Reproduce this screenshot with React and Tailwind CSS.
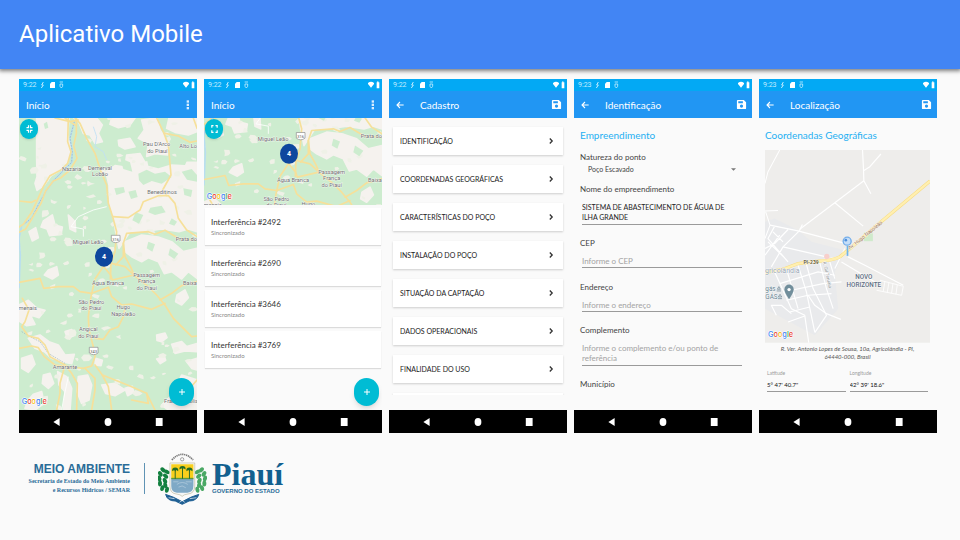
import React from "react";

const FONT = "font-[Lato,'Open_Sans',sans-serif]";

/* ---------- phone chrome ---------- */

function StatusBar({ time }) {
  return (
    <div className="flex h-3 items-center bg-[#03a9f4] pr-0.5 pl-1 font-[Roboto,sans-serif] text-[7px] leading-3 text-[#c4ecff]">
      <span>{time}</span>
      <svg viewBox="0 0 72 24" className="ml-1 h-2 w-6" fill="none" stroke="#c4ecff" strokeWidth="3" aria-hidden="true">
        <path d="M7 3 L2 12 H7 L1 21" />
        <path d="M27 8 L32 3 H42 V21 H27 Z" fill="#ffffff" stroke="none" />
        <path d="M56 3 H66 M57 9 H65 V16 L61 21 L57 16 Z" strokeWidth="2.5" />
      </svg>
      <svg viewBox="0 0 36 24" className="ml-auto h-2 w-3" fill="#ffffff" aria-hidden="true">
        <path d="M0 6 Q9 -1 18 6 V9 L9 20 L0 9 Z" />
        <path d="M26 4 H28 V1 H31 V4 H34 V22 H26 Z" />
      </svg>
    </div>
  );
}

function BackIcon() {
  return (
    <svg viewBox="0 0 24 24" className="h-2 w-2" fill="none" stroke="currentColor" strokeWidth="3.2" aria-hidden="true">
      <path d="M23 12 H4 M12 3 L3 12 L12 21" />
    </svg>
  );
}

function SaveIcon() {
  return (
    <svg viewBox="0 0 24 24" className="h-[11px] w-[11px]" fill="currentColor" aria-hidden="true">
      <path fillRule="evenodd" d="M4 2 H17 L22 7 V20 Q22 22 20 22 H4 Q2 22 2 20 V4 Q2 2 4 2 Z M5 5 V9 H15 V5 Z M12 12 A3.4 3.4 0 1 0 12 19 A3.4 3.4 0 1 0 12 12 Z" />
    </svg>
  );
}

function Toolbar({ title, back }) {
  return (
    <div className="flex h-[27px] items-center bg-[#2196f3] px-[7px] text-white">
      {back && (
        <button type="button" aria-label="Voltar" className="mr-4">
          <BackIcon />
        </button>
      )}
      <h2 className="text-[10px] leading-4">{title}</h2>
      <button type="button" aria-label={back ? "Salvar" : "Mais opções"} className="-mr-0.5 ml-auto">
        {back ? (
          <SaveIcon />
        ) : (
          <svg viewBox="0 0 12 30" className="mr-0.5 h-2.5 w-1" fill="#d9edff" aria-hidden="true">
            <rect x="2" y="1" width="7" height="7" />
            <rect x="2" y="11" width="7" height="7" />
            <rect x="2" y="21" width="7" height="7" />
          </svg>
        )}
      </button>
    </div>
  );
}

function NavBar() {
  return (
    <div className="grid h-[23px] grid-cols-3 place-items-center bg-black px-3 text-white">
      <button type="button" aria-label="Voltar">
        <svg viewBox="0 0 8 8" className="h-2 w-2" fill="currentColor"><path d="M0.4 4 L6.6 0 V8 Z" /></svg>
      </button>
      <button type="button" aria-label="Tela inicial">
        <svg viewBox="0 0 8 8" className="h-2 w-2" fill="currentColor"><ellipse cx="4" cy="4" rx="3.4" ry="4" /></svg>
      </button>
      <button type="button" aria-label="Recentes">
        <svg viewBox="0 0 8 8" className="h-2 w-2" fill="currentColor"><rect x="0.8" width="6.8" height="8" /></svg>
      </button>
    </div>
  );
}

function Phone({ time, title, back, children }) {
  return (
    <section className="min-w-0 bg-[#fafafa]">
      <StatusBar time={time} />
      <Toolbar title={title} back={back} />
      <div className="relative h-73 overflow-hidden">{children}</div>
      <NavBar />
    </section>
  );
}

/* ---------- maps ---------- */

function GoogleMark({ x, y }) {
  return (
    <text x={x} y={y} fontFamily="Inter, Roboto, sans-serif" fontSize="22" fontWeight="500" stroke="#ffffff" strokeWidth="3" paintOrder="stroke">
      <tspan fill="#4285f4">G</tspan>
      <tspan fill="#ea4335">o</tspan>
      <tspan fill="#fbbc05">o</tspan>
      <tspan fill="#4285f4">g</tspan>
      <tspan fill="#34a853">l</tspan>
      <tspan fill="#ea4335">e</tspan>
    </text>
  );
}

const CLEARINGS = [
  "65,129 162,129 158,180 167,215 158,262 138,284 108,302 88,330 66,346 60,325 66,306 65,250",
  "185,129 245,129 262,150 250,175 262,200 240,205 225,180 205,175 195,150",
  "290,129 360,129 345,150 310,158 285,148",
  "380,135 425,129 435,165 462,205 458,240 420,236 395,244 400,205 370,190 388,165",
  "462,129 546,129 546,170 520,180 480,172 455,160",
  "310,196 345,190 360,215 330,222 312,212",
  "335,240 375,236 390,262 430,255 470,270 500,262 546,262 546,470 520,462 492,470 440,462 400,468 345,470 325,500 312,520 302,470 296,430 284,390 282,330 272,290 300,272 330,276",
  "330,500 380,480 430,486 470,500 505,530 546,520 546,610 520,590 500,612 470,590 448,596 430,560 400,548 380,560 350,545 330,530",
  "85,438 112,420 120,450 142,456 138,478 104,482 96,462 78,456",
  "100,585 125,575 130,600 112,612 88,600",
  "160,420 180,440 182,470 165,462",
  "42,470 62,458 70,488 52,498",
  "12,690 40,676 66,700 90,706 72,728 46,720 60,748 35,752 12,738",
  "40,790 75,780 102,800 130,810 150,840 178,838 170,866 140,860 110,850 88,830 60,820",
  "20,850 50,840 60,868 40,892 20,880",
  "128,890 155,905 170,940 165,1005 145,1005 150,950 132,930",
  "190,905 218,900 230,930 222,975 200,985 186,950",
  "85,900 105,895 116,925 100,940 82,925",
  "55,958 80,950 88,985 60,1005 30,1000 40,975",
  "260,930 300,925 330,945 300,962 272,955",
  "242,850 262,856 258,872 240,870",
  "486,660 510,645 520,668 500,690 482,680",
  "425,780 450,774 456,788 440,800 426,796",
  "470,808 500,800 515,815 546,806 546,830 510,828 480,835",
  "425,852 448,844 452,856 436,866",
  "515,860 546,850 546,885 530,880",
  "330,940 352,934 356,952 338,962",
  "150,770 170,764 176,782 158,790",
  "500,900 546,915 546,1005 460,1005 440,990 470,960",
];

const WOODS = [
  "395,250 440,244 500,254 520,246 510,270 470,268 430,280 400,272",
  "370,296 395,284 420,296 450,290 470,306 440,326 410,318 385,330 372,316",
  "298,340 326,336 330,352 304,360",
  "316,250 345,262 352,290 325,282",
  "490,190 520,206 546,204 546,252 520,244 500,228",
  "406,398 440,392 452,412 420,420 400,412",
  "340,350 362,345 368,366 348,372",
  "500,290 530,282 546,300 546,320 516,314",
  "362,412 385,420 372,446 352,436",
  "470,430 486,440 478,452 462,446",
  "505,340 532,345 528,366 508,360",
  "86,146 96,140 100,158 90,162",
  "400,500 420,508 412,530 395,520",
  "465,520 490,536 478,552 460,540",
];

/* small scattered clearings, same layout on every render */
const SPECKS = (() => {
  let seed = 11;
  const rnd = () => {
    seed = (seed * 16807) % 2147483647;
    return seed / 2147483647;
  };
  return Array.from({ length: 190 }, () => {
    const x = 12 + rnd() * 534;
    const y = 129 + rnd() * 876;
    const r = 4 + rnd() * 6;
    return Array.from({ length: 6 }, (_, k) => {
      const a = (k / 6) * Math.PI * 2;
      const q = r * (0.4 + rnd());
      return `${(x + Math.cos(a) * q * 1.4).toFixed(1)},${(y + Math.sin(a) * q).toFixed(1)}`;
    }).join(" ");
  }).filter((_, k) => k % 3 !== 2);
})();

const ROADS = [
  "M180 129 L195 145 L215 190 L240 235 L258 290 L275 330 L280 385 L293 425 L305 470 L300 530 L288 565 L286 612",
  "M160 129 L158 200 L168 230 L158 265 L138 285 L105 302 L85 335 L65 380 L50 412 L25 448 L12 456",
  "M184 129 L184 175 L176 212 L186 250 L165 285 L138 308 L115 318 L92 348 L78 385 L50 432 L32 462 L12 472",
  "M120 129 L165 140 L190 135 M150 129 L180 150",
  "M425 129 L445 170 L460 210 L468 300 L443 345 L456 362",
  "M450 175 L490 183 L525 202 L546 198 M535 129 L546 160",
  "M293 425 L340 428 L375 405 L385 380 L430 362 L460 362 L480 385 L490 430 L515 465 L546 485",
  "M302 570 L325 545 L325 505 L335 475 L400 470 L420 478 L450 466 L490 490 L546 496",
  "M12 378 L50 382 L62 376",
  "M12 622 L75 610 L86 640 L130 635 L175 635 L195 650 L230 655 L280 637",
  "M268 570 L240 612 L228 665 L220 725 L222 765 L235 815 L240 845 L230 873 L205 880 L120 870 L88 845 L70 818 L50 813 L12 820",
  "M280 637 L290 665 L320 690 L350 687 L410 703 L450 685 M435 675 L470 655 L500 632 L546 620",
  "M290 565 L330 575 L357 600 L400 635 L425 660 L450 690 L475 730 L530 785 L546 783",
  "M325 505 L330 545 L348 578 L357 600 L292 615 L287 600 L266 575",
  "M240 790 L265 793 L285 765 L310 755 L325 725 L330 700",
  "M22 670 L42 705 L30 740 L20 755 L40 783 L70 790 L90 810 L105 845 L150 870 L170 895 L187 925 L185 1005",
  "M150 870 L135 925 L135 955 L125 1005",
  "M210 880 L240 910 L240 945 L230 1005",
  "M240 870 L262 900 L300 915 L350 935 L395 955 L420 1005",
  "M262 900 L280 935 L290 1005 M395 955 L400 985 L350 975",
  "M546 915 L520 945 L500 960",
];

const PLACES = [
  [425, 213, "Pau D'Arco"], [427, 234, "do Piauí"], [524, 220, "Alto Lon"],
  [170, 288, "Nazaria"], [255, 284, "Demerval"], [255, 304, "Lobão"],
  [441, 358, "Beneditinos"], [219, 507, "Miguel Leão"], [514, 498, "Prata do"],
  [279, 630, "Água Branca"], [395, 605, "Passagem"], [395, 625, "França"],
  [395, 646, "do Piauí"], [525, 630, "Baixa"], [229, 686, "São Pedro"],
  [229, 705, "do Piauí"], [325, 703, "Hugo"], [325, 723, "Napoleão"],
  [38, 705, "menais"], [220, 769, "Angical"], [220, 788, "do Piauí"],
  [150, 883, "Amarante"], [498, 985, "Francinópolis"],
];

function Shield({ x, y, label }) {
  return (
    <g>
      <path d={`M${x - 13} ${y - 11} H${x + 13} V${y + 6} Q${x} ${y + 16} ${x - 13} ${y + 6} Z`} fill="#ffffff" stroke="#8a8a8a" strokeWidth="2" />
      <text x={x} y={y + 5} fontFamily="Roboto, sans-serif" fontSize="12" textAnchor="middle" fill="#555555">{label}</text>
    </g>
  );
}

function RegionMap({ top, height, className }) {
  return (
    <svg viewBox={`12 ${top} 534 ${height}`} preserveAspectRatio="xMidYMid slice" className={className} role="img" aria-label="Mapa das interferências">
      <rect x="-100" y="0" width="800" height="1100" fill="#cdeccf" />
      <g fill="#f5f2ee" strokeLinejoin="round" stroke="#f5f2ee" strokeWidth="5">
        {CLEARINGS.map((p) => <polygon key={p} points={p} />)}
      </g>
      <g fill="#eff1e7">
        {SPECKS.map((p) => <polygon key={p} points={p} />)}
      </g>
      <g fill="#cdeccf" strokeLinejoin="round">
        {WOODS.map((p) => <polygon key={p} points={p} />)}
      </g>
      <path d="M235 155 L245 185 L240 215 L265 230 L275 255" fill="none" stroke="#bfe0f5" strokeWidth="2.5" />
      <path d="M178 140 L165 190 L172 230 L170 262 L120 312 L95 345 L72 385 L50 430 L20 452 L12 490 L16 540 L12 640" fill="none" stroke="#b9def0" strokeWidth="5" />
      <path d="M178 140 L165 190 L172 230 L170 262 L120 312 L95 345 L72 385 L50 430 L20 452" fill="none" stroke="#8fa5b2" strokeWidth="1.5" strokeDasharray="5 4" />
      <path d="M20 770 L45 785 L75 800 L100 835 L150 865" fill="none" stroke="#9bb4bf" strokeWidth="2" strokeDasharray="5 3" />
      <path d="M168 455 L190 425 L235 405 L275 395 M168 455 L205 462 L205 485 M160 905 L148 960 L140 1005" fill="none" stroke="#ffffff" strokeWidth="2.5" />
      <g fill="none" stroke="#f6e09a" strokeWidth="5" strokeLinejoin="round" strokeLinecap="round">
        {ROADS.map((d) => <path key={d} d={d} />)}
      </g>
      <Shield x={302} y={492} label="316" />
      <Shield x={236} y={828} label="343" />
      <g fontFamily="Roboto, sans-serif" fontSize="17" textAnchor="middle" fill="#6c6c6c" stroke="#ffffff" strokeWidth="2" paintOrder="stroke">
        {PLACES.map(([x, y, name]) => <text key={`${x}-${y}`} x={x} y={y}>{name}</text>)}
      </g>
      <ellipse cx="267" cy="545" rx="27" ry="30" fill="#0d479e" />
      <text x="267" y="552" fontFamily="Roboto, sans-serif" fontSize="21" fontWeight="700" textAnchor="middle" fill="#ffffff">4</text>
      <GoogleMark x={20} y={top + height - 17} />
    </svg>
  );
}

function StreetMap() {
  return (
    <svg viewBox="31 225 494 577" className="block w-full" role="img" aria-label="Mapa do local">
      <rect x="31" y="225" width="494" height="577" fill="#eeedeb" />
      <path d="M31 440 L60 430 L130 465 L170 500 L270 525 L240 590 L250 700 L180 780 L31 700 Z" fill="#e9eaec" />
      <rect x="327" y="472" width="27" height="26" fill="#cfeacb" />
      <g fill="none" stroke="#ffffff" strokeWidth="3.5" strokeLinejoin="round">
        <path d="M323 225 L326 285 L327 317 L348 356 M326 287 L345 275 L378 237 M327 317 L240 383 L135 462 M240 383 L325 453" />
        <path d="M75 225 L40 290 L31 325 M31 408 L70 406 M33 410 L46 450 L31 490" strokeWidth="3" />
        <path d="M46 450 L130 467 L265 503 M143 448 L133 468 L85 515 L50 575 M100 463 L60 505 L31 520 M60 453 L40 490 L100 560 M75 480 L31 540 M55 470 L85 500 M40 500 L90 548" />
        <path d="M85 515 L150 530 L215 545 M270 520 L240 580 M280 545 L330 570 L445 630 M260 560 L360 620" />
        <path d="M60 590 L110 700 L150 720 L162 802 M95 580 L130 700 M130 570 L155 650 L180 770 M155 567 L175 640 L215 720 L180 772 M195 562 L215 640 L235 700 M225 560 L240 610" />
        <path d="M75 625 L190 590 L240 600 M85 650 L205 625 L260 620 M95 675 L160 660 L230 655 M105 710 L165 695 M160 660 L180 690 L215 715 L258 732 M100 740 L150 722 M110 715 L80 690 L50 690 L65 720 M165 560 L255 545" />
        <path d="M375 615 L445 633 L440 660 L365 645 M390 618 L385 648 M402 622 L397 652 M414 625 L410 654 M427 629 L423 657" strokeWidth="2.5" />
      </g>
      <path d="M525 318 L370 447 L300 508 L255 545 Q235 556 190 558 L130 565 L85 582 L31 592" fill="none" stroke="#f7dc82" strokeWidth="10" />
      <path d="M525 318 L370 447 L300 508 L255 545 Q235 556 190 558 L130 565 L85 582 L31 592" fill="none" stroke="#ffefb0" strokeWidth="7" />
      <circle cx="216" cy="544" r="8" fill="#f8cfcb" />
      <g stroke="#ffffff" strokeWidth="2" paintOrder="stroke" fontFamily="Roboto, sans-serif">
        <text transform="translate(285 524) rotate(-39)" fontSize="15" fill="#94683f">Av. Hugo Napoleão</text>
        <text x="146" y="567" fontSize="15" fontWeight="700" fill="#6a6038">PI-239</text>
        <text transform="translate(204 560) rotate(77)" fontSize="14" fill="#8a8f94">R. Gil Teruáia</text>
        <text x="31" y="593" fontSize="21" fill="#97a4b5">gricolândia</text>
        <g fontSize="19" fontWeight="500" fill="#5c6d80" textAnchor="middle">
          <text x="327" y="611">NOVO</text>
          <text x="327" y="635">HORIZONTE</text>
        </g>
        <g fontSize="19" fill="#64808f">
          <text x="32" y="648">gás</text>
          <text x="32" y="671">GÁS</text>
        </g>
      </g>
      <path d="M66 647 H79 M68 642 L72.500 634 L77 642 Z M70 670 H82 M71 665 L76 657 L81 665 Z" fill="none" stroke="#64808f" strokeWidth="2" />
      <path d="M103 672 Q89 652 89 643 A14 15 0 1 1 117 643 Q117 652 103 672 Z" fill="#718e9b" />
      <circle cx="103" cy="643" r="5" fill="#ffffff" />
      <path d="M278 512 V542" stroke="#6fb4ea" strokeWidth="5" />
      <circle cx="277" cy="498" r="12" fill="#c5def8" stroke="#74aeea" strokeWidth="4" />
      <circle cx="273" cy="495" r="4" fill="#4d8fdc" />
      <GoogleMark x={40} y={786} />
    </svg>
  );
}

/* ---------- screens ---------- */

function AddButton() {
  return (
    <button type="button" aria-label="Adicionar" className="absolute right-[3px] bottom-1 flex h-7 w-[25px] items-center justify-center rounded-full bg-[#00bcd4] shadow-md">
      <svg viewBox="0 0 8 8" className="h-2 w-2" stroke="#ffffff" strokeWidth="1"><path d="M4 1 V7 M1 4 H7" /></svg>
    </button>
  );
}

function SizeButton({ expanded }) {
  return (
    <button type="button" aria-label={expanded ? "Reduzir mapa" : "Ampliar mapa"} className="absolute top-px left-px flex h-5 w-[18px] items-center justify-center rounded-full bg-[#00bcd4] shadow">
      <svg viewBox="0 0 20 24" className="h-2 w-[7px]" fill="none" stroke="#ffffff" strokeWidth="3.5" aria-hidden="true">
        <path d={expanded ? "M1 8 H7 V1 M13 1 V8 H19 M1 16 H7 V23 M13 23 V16 H19" : "M2 8 V2 H7 M13 2 H18 V8 M2 16 V22 H7 M13 22 H18 V16"} />
      </svg>
    </button>
  );
}

function HomeMap() {
  return (
    <Phone time="9:22" title="Início">
      <RegionMap top={129} height={876} className="block h-full w-full" />
      <SizeButton expanded />
      <AddButton />
    </Phone>
  );
}

function HomeList() {
  return (
    <Phone time="9:22" title="Início">
      <RegionMap top={437} height={262} className="block h-[87px] w-full" />
      <SizeButton />
      <ul className="flex flex-col gap-1 px-px pt-[3px]">
        {["#2492", "#2690", "#3646", "#3769"].map((id) => (
          <li key={id} className="h-[37px] bg-white px-1.5 pt-2 shadow-[0_1px_1px_rgba(0,0,0,0.12)]">
            <p className="text-[8px] leading-3 text-[#333333]">Interferência {id}</p>
            <p className="text-[6px] leading-[10px] text-[#888888]">Sincronizado</p>
          </li>
        ))}
      </ul>
      <AddButton />
    </Phone>
  );
}

const SECTIONS = [
  "IDENTIFICAÇÃO",
  "COORDENADAS GEOGRÁFICAS",
  "CARACTERÍSTICAS DO POÇO",
  "INSTALAÇÃO DO POÇO",
  "SITUAÇÃO DA CAPTAÇÃO",
  "DADOS OPERACIONAIS",
  "FINALIDADE DO USO",
];

function Register() {
  return (
    <Phone time="9:22" title="Cadastro" back>
      <div className="flex h-[277px] flex-col gap-2.5 overflow-hidden px-1 pt-[9px]">
        {SECTIONS.map((name) => (
          <button key={name} type="button" className="flex h-7 shrink-0 items-center justify-between bg-white pr-2 pl-[7px] text-left text-[7px] leading-3 text-[#222222] shadow-[0_1px_2px_rgba(0,0,0,0.18)]">
            {name}
            <svg viewBox="0 0 8 8" className="h-2 w-2" fill="none" stroke="#333333" strokeWidth="1.3" aria-hidden="true"><path d="M2.8 1.5 L5.2 4 L2.8 6.500" /></svg>
          </button>
        ))}
        <div className="h-7 shrink-0 bg-white shadow-[0_1px_2px_rgba(0,0,0,0.18)]" />
      </div>
    </Phone>
  );
}

const LABEL = "block text-[8px] leading-3 text-[#444444]";
const FIELD = "block w-full resize-none overflow-hidden border-b border-[#9a9a9a] bg-transparent py-0 pr-2 pl-0 leading-[10px] text-[#222222] outline-none placeholder:text-[#a3a3a3]";

function Identification() {
  return (
    <Phone time="9:23" title="Identificação" back>
      <form className="px-1.5 pt-[9px]">
        <h3 className="text-[10px] leading-4 text-[#1fb0f2]">Empreendimento</h3>
        <label htmlFor="tipo" className={`${LABEL} mt-2`}>Natureza do ponto</label>
        <div className="relative mr-2.5 ml-2">
          <select id="tipo" className="block w-full appearance-none bg-transparent text-[7px] leading-3 text-[#444444] outline-none">
            <option>Poço Escavado</option>
          </select>
          <svg viewBox="0 0 6 3" className="absolute top-[5px] right-0 h-[3px] w-[5px]" fill="#777777" aria-hidden="true"><path d="M0 0 H6 L3 3 Z" /></svg>
        </div>
        <label htmlFor="nome" className={`${LABEL} mt-2`}>Nome do empreendimento</label>
        <div className="mr-1 ml-0.5 pt-[7px]">
          <textarea id="nome" rows={2} defaultValue="SISTEMA DE ABASTECIMENTO DE ÁGUA DE ILHA GRANDE" className={`${FIELD} h-[23px] text-[7px]`} />
        </div>
        <label htmlFor="cep" className={`${LABEL} mt-3`}>CEP</label>
        <div className="mr-1 ml-0.5 pt-1.5">
          <input id="cep" placeholder="Informe o CEP" className={`${FIELD} h-[13px] text-[8px]`} />
        </div>
        <label htmlFor="endereco" className={`${LABEL} mt-[13px]`}>Endereço</label>
        <div className="mr-1 ml-0.5 pt-1.5">
          <input id="endereco" placeholder="Informe o endereço" className={`${FIELD} h-[13px] text-[8px]`} />
        </div>
        <label htmlFor="complemento" className={`${LABEL} mt-3`}>Complemento</label>
        <div className="mr-1 ml-0.5 pt-[7px]">
          <textarea id="complemento" rows={2} placeholder="Informe o complemento e/ou ponto de referência" className={`${FIELD} h-[23px] text-[8px]`} />
        </div>
        <p className={`${LABEL} mt-3`}>Município</p>
      </form>
    </Phone>
  );
}

function Coordinate({ id, label, value }) {
  return (
    <div className="min-w-0">
      <label htmlFor={id} className="block text-[5px] leading-2 text-[#9a9a9a]">{label}</label>
      <input id={id} defaultValue={value} className="block h-[15px] w-full border-b border-[#9a9a9a] bg-transparent p-0 pt-0.5 text-[6px] leading-3 text-[#111111] outline-none" />
    </div>
  );
}

function Location() {
  return (
    <Phone time="9:23" title="Localização" back>
      <div className="pt-[9px] pr-[7px] pl-1.5">
        <h3 className="mb-[7px] text-[10px] leading-4 whitespace-nowrap text-[#1fb0f2]">Coordenadas Geográficas</h3>
        <StreetMap />
        <p className="mt-0.5 px-2 text-center text-[6px] leading-2 text-[#555555] italic">
          R. Ver. Antonio Lopes de Sousa, 10a, Agricolândia - PI, 64440-000, Brasil
        </p>
        <div className="mt-2 grid grid-cols-2 gap-1 px-0.5">
          <Coordinate id="lat" label="Latitude" value={"5° 47' 40.7\""} />
          <Coordinate id="lng" label="Longitude" value={"42° 39' 18.6\""} />
        </div>
      </div>
    </Phone>
  );
}

/* ---------- footer logos ---------- */

function Leaves({ side }) {
  const s = side === "left" ? -1 : 1;
  const leaves = [
    [58, 78, 20], [66, 90, 5], [69, 104, -10], [67, 119, -25], [60, 133, -42],
    [46, 84, 35], [50, 97, 20], [52, 111, 0], [51, 124, -15], [46, 138, -35],
  ];
  return (
    <g fill={side === "left" ? "#13803f" : "#4aa864"}>
      {leaves.map(([dx, y, a]) => (
        <ellipse key={`${dx}-${y}`} cx={503 + s * dx} cy={y - 2} rx="6" ry="9" transform={`rotate(${s * (a + 25)} ${503 + s * dx} ${y - 2})`} />
      ))}
    </g>
  );
}

function Palm({ x, y }) {
  return (
    <g>
      <path d={`M${x} ${y} V103`} stroke="#2d6b28" strokeWidth="3" />
      <path d={`M${x - 9} ${y + 4} Q${x - 11} ${y - 7} ${x} ${y - 7} Q${x + 11} ${y - 7} ${x + 9} ${y + 4} L${x + 3} ${y} L${x} ${y + 5} L${x - 3} ${y} Z`} fill="#226b26" />
    </g>
  );
}

function CoatOfArms() {
  return (
    <svg viewBox="430 22 148 160" className="h-[53px] w-[49px]" role="img" aria-label="Brasão do Piauí">
      <path d="M472 46 Q503 12 536 46" fill="none" stroke="#777777" strokeWidth="5" strokeDasharray="4 2" />
      <circle cx="503" cy="44" r="5" fill="none" stroke="#777777" strokeWidth="2" />
      <Leaves side="left" />
      <Leaves side="right" />
      <path d="M453 150 Q475 156 503 172 Q531 156 553 150 Q548 170 524 170 L503 180 L482 170 Q458 170 453 150 Z" fill="#1e5f93" stroke="#1e5f93" strokeWidth="3" />
      <path d="M462 160 L480 163 M526 163 L546 160 M495 174 L503 168 L511 174" stroke="#ffffff" strokeWidth="2" fill="none" />
      <path d="M466 55 H541 V125 Q541 147 520 149 Q508 150 503 156 Q498 150 486 149 Q466 147 466 125 Z" fill="#f4f6f6" stroke="#a9a682" strokeWidth="1.5" />
      <path d="M470 59 H537 V103 H470 Z" fill="#f8cf1c" />
      <path d="M470 103 H537 V124 Q537 143 519 145 H487 Q470 143 470 124 Z" fill="#7fa9c6" />
      <path d="M487 120 Q503 108 520 120 M492 128 Q503 120 514 130 M476 112 H492 M514 112 H532" stroke="#b9d0e0" strokeWidth="2" fill="none" />
      <path d="M470 100 H537 V104 H470 Z" fill="#5e9a3c" />
      <Palm x={482} y={76} />
      <Palm x={504} y={71} />
      <Palm x={525} y={76} />
    </svg>
  );
}

function Logos() {
  return (
    <footer className="mt-[19px] flex items-center pl-5 text-[#2a6c98]">
      <div className="flex w-[110px] flex-col items-end font-['Liberation_Sans',sans-serif] font-bold whitespace-nowrap">
        <span className="text-[12px] leading-[15px]">MEIO AMBIENTE</span>
        <span className="font-['Liberation_Serif',serif] text-[6px] leading-[9px]">Secretaria de Estado do Meio Ambiente</span>
        <span className="font-['Liberation_Serif',serif] text-[6px] leading-[9px]">e Recursos Hídricos / SEMAR</span>
      </div>
      <div className="mr-[13px] ml-3.5 h-[31px] w-px bg-[#5f93b4]" />
      <CoatOfArms />
      <div className="ml-[5px] flex flex-col font-bold whitespace-nowrap">
        <span className="font-['Liberation_Serif',serif] text-[32px] leading-[26px] text-[#12608f]">Piauí</span>
        <span className="font-['Liberation_Sans',sans-serif] text-[6px] leading-[9px]">GOVERNO DO ESTADO</span>
      </div>
    </footer>
  );
}

export default function App() {
  return (
    <div className={`min-h-screen bg-[#fafafa] ${FONT}`}>
      <header className="flex h-[69px] items-center bg-[#4285f4] px-[19px] pb-0.5 shadow-[0_1px_4px_1px_rgba(0,0,0,0.5)]">
        <h1 className="font-[Roboto,sans-serif] text-2xl text-white">Aplicativo Mobile</h1>
      </header>
      <main className="grid grid-cols-5 gap-[7px] pt-2.5 pr-[23px] pl-[19px]">
        <HomeMap />
        <HomeList />
        <Register />
        <Identification />
        <Location />
      </main>
      <Logos />
    </div>
  );
}
